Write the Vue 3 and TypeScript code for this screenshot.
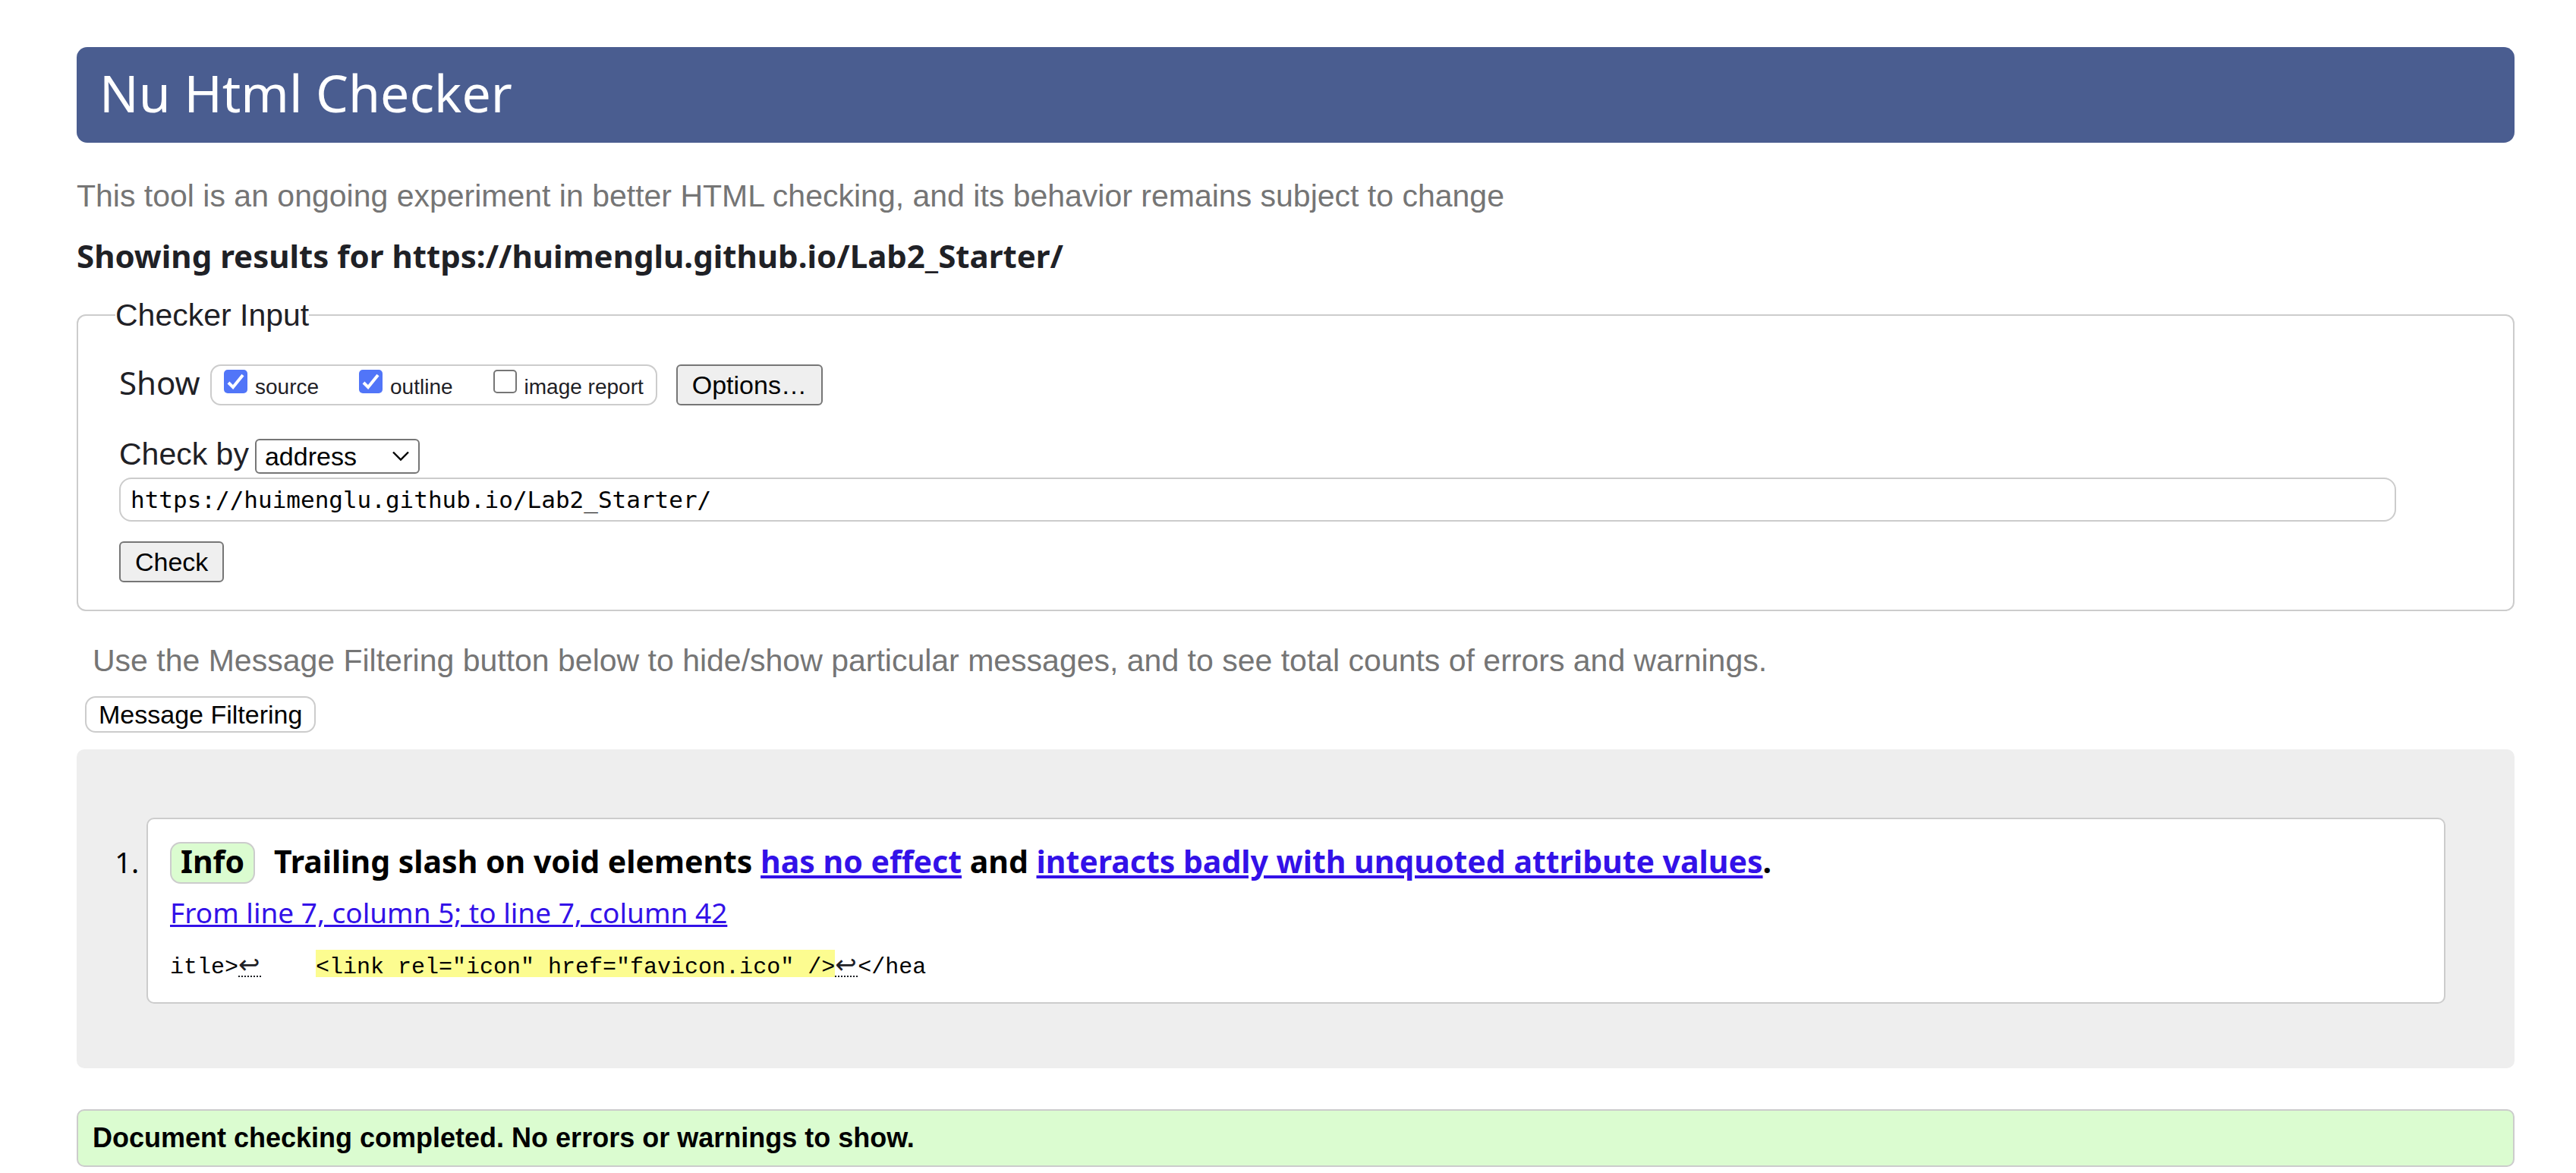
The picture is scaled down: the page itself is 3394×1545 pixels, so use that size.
<script setup lang="ts">
import { ref } from 'vue'

interface ShowOption {
  id: string
  label: string
  checked: boolean
}

const showOptions = ref<ShowOption[]>([
  { id: 'show-source', label: 'source', checked: true },
  { id: 'show-outline', label: 'outline', checked: true },
  { id: 'show-image-report', label: 'image report', checked: false },
])

const method = ref('address')
const address = ref('https://huimenglu.github.io/Lab2_Starter/')
</script>

<template>
  <div class="page">
    <h1 class="banner">Nu Html Checker</h1>
    <p class="note">This tool is an ongoing experiment in better HTML checking, and its behavior remains subject to change</p>
    <h2 class="target">Showing results for https://huimenglu.github.io/Lab2_Starter/</h2>

    <form @submit.prevent>
      <fieldset class="panel">
        <legend class="legend">Checker Input</legend>
        <div class="fields">
          <div class="row show-row">
            <span class="show-title">Show</span>
            <div class="checks">
              <label v-for="option in showOptions" :key="option.id" class="check" :for="option.id">
                <input :id="option.id" v-model="option.checked" class="box" type="checkbox" />
                <span class="check-text">{{ option.label }}</span>
              </label>
            </div>
            <button class="push options" type="button">Options…</button>
          </div>
          <div class="row method-row">
            <label class="method-label" for="method">Check by</label>
            <select id="method" v-model="method" class="method">
              <option value="address">address</option>
              <option value="upload">file upload</option>
              <option value="text">text input</option>
            </select>
          </div>
          <input v-model="address" class="address" type="text" aria-label="Address" spellcheck="false" />
          <button class="push submit" type="submit">Check</button>
        </div>
      </fieldset>
    </form>

    <p class="note hint">Use the Message Filtering button below to hide/show particular messages, and to see total counts of errors and warnings.</p>
    <button class="filter" type="button">Message Filtering</button>

    <ol class="results">
      <li class="message">
        <p class="summary"><span class="badge">Info</span><span>Trailing slash on void elements <a href="#effect">has no effect</a> and <a href="#unquoted">interacts badly with unquoted attribute values</a>.</span></p>
        <p class="location"><a href="#l7c42">From line 7, column 5; to line 7, column 42</a></p>
        <p class="extract"><code>itle&gt;<span class="newline" title="Line break">↩</span>{{ '    ' }}<mark class="hit">&lt;link rel="icon" href="favicon.ico" /&gt;</mark><span class="newline" title="Line break">↩</span>&lt;/hea</code></p>
      </li>
    </ol>

    <p class="success">Document checking completed. No errors or warnings to show.</p>
  </div>
</template>

<style>
body {
  margin: 0;
  background: #fff;
}
</style>

<style scoped>
.page {
  padding: 62px 81px 10px 101px;
  color: #1f2126;
  font-family: "Liberation Sans", Arial, sans-serif;
  font-size: 41px;
  line-height: 48px;
}

h1, h2, p, ol, fieldset {
  margin: 0;
}

button, input, select {
  box-sizing: border-box;
  margin: 0;
  font-family: "Liberation Sans", Arial, sans-serif;
  font-size: 34px;
  color: #000;
}

a {
  color: #3311e8;
  text-decoration: underline;
}

.banner {
  padding: 0 30px 6px;
  border-radius: 14px;
  background: #4a5d90;
  color: #fff;
  font: 400 68px/120px "Noto Sans", sans-serif;
}

.note {
  margin-top: 46px;
  color: #757575;
}

.target {
  margin-top: 25px;
  font: 700 42px/60px "Noto Sans", sans-serif;
}

.panel {
  margin-top: 24px;
  padding: 0 149px 36px 49px;
  border: 2px solid #ccc;
  border-radius: 12px;
  min-width: 0;
}

.legend {
  padding: 0;
}

.fields {
  display: flex;
  flex-direction: column;
  align-items: flex-start;
  margin: 41px 5px 0;
}

.row {
  display: flex;
  align-items: flex-start;
}

.show-title {
  min-width: 120px;
  font: 400 42px/48px "Noto Sans", sans-serif;
}

.checks {
  display: flex;
  gap: 53px;
  padding: 0 16px;
  border: 2px solid #ccc;
  border-radius: 14px;
}

.check {
  display: flex;
  gap: 10px;
  align-items: flex-start;
  height: 50px;
}

.check-text {
  padding-top: 12px;
  font-size: 28px;
  line-height: 32px;
}

.box {
  appearance: none;
  width: 31px;
  height: 31px;
  margin-top: 5px;
  border: 2px solid #767676;
  border-radius: 5px;
  background: #fff;
}

.box:checked {
  border: 0;
  background: #5175f8 url("data:image/svg+xml,%3Csvg xmlns='http://www.w3.org/2000/svg' viewBox='0 0 31 31'%3E%3Cpath d='M6 17 L12 23 L25 7' fill='none' stroke='white' stroke-width='4'/%3E%3C/svg%3E") center / 31px 31px no-repeat;
}

.push {
  height: 54px;
  padding: 0 19px;
  border: 2px solid #767676;
  border-radius: 6px;
  background: #efefef;
  line-height: 48px;
}

.options {
  margin-left: 25px;
}

.method-row {
  gap: 8px;
  margin-top: 44px;
}

.method-label {
  line-height: 40px;
}

.method {
  appearance: none;
  width: 217px;
  height: 46px;
  padding: 0 11px;
  border: 2px solid #767676;
  border-radius: 6px;
  background: #fff url("data:image/svg+xml,%3Csvg xmlns='http://www.w3.org/2000/svg' viewBox='0 0 22 14'%3E%3Cpath d='M1 1.5 L11 11.5 L21 1.5' fill='none' stroke='black' stroke-width='2.4'/%3E%3C/svg%3E") right 12px center / 22px 14px no-repeat;
}

.address {
  width: 100%;
  height: 58px;
  margin-top: 5px;
  padding: 0 13px;
  border: 2px solid #ccc;
  border-radius: 16px;
  background: #fff;
  font-family: "DejaVu Sans Mono", monospace;
  font-size: 31px;
}

.submit {
  margin-top: 26px;
}

.hint {
  margin-top: 41px;
  padding-left: 21px;
}

.filter {
  display: block;
  height: 48px;
  margin: 23px 0 0 11px;
  padding: 0 16px;
  border: 2px solid #ccc;
  border-radius: 14px;
  background: #fff;
}

.results {
  margin-top: 22px;
  padding: 90px 91px 85px 92px;
  border-radius: 10px;
  background: #eee;
  color: #000;
}

.message {
  padding: 25px 29px 22px;
  border: 2px solid #ccc;
  border-radius: 10px;
  background: #fff;
}

.message::marker {
  font-family: "Noto Sans", sans-serif;
  font-size: 38px;
}

.summary {
  font: 700 41px/60px "Noto Sans", sans-serif;
}

.badge {
  display: inline-block;
  margin-right: 25px;
  padding: 0 12px 4px;
  border: 2px solid #ccc;
  border-radius: 14px;
  background: #dbfcd0;
  line-height: 47px;
}

.location {
  margin-top: 12px;
  font: 400 37px/52px "Noto Sans", sans-serif;
}

.extract {
  margin-top: 22px;
  height: 48px;
}

.extract code {
  display: block;
  font: 400 30px/48px "Liberation Mono", monospace;
  white-space: pre;
}

.newline {
  display: inline-block;
  width: 30px;
  border-bottom: 2px dotted #1f2126;
  color: #1f2126;
  font: 400 34px/30px "DejaVu Sans", sans-serif;
}

.hit {
  display: inline-block;
  padding-top: 11px;
  background: #fcfc90;
  color: #000;
  line-height: 25px;
}

.success {
  margin-top: 54px;
  padding: 0 19px;
  border: 2px solid #ccc;
  border-radius: 10px;
  background: #dbfcd0;
  color: #000;
  font-size: 36px;
  font-weight: 700;
  line-height: 72px;
}
</style>
